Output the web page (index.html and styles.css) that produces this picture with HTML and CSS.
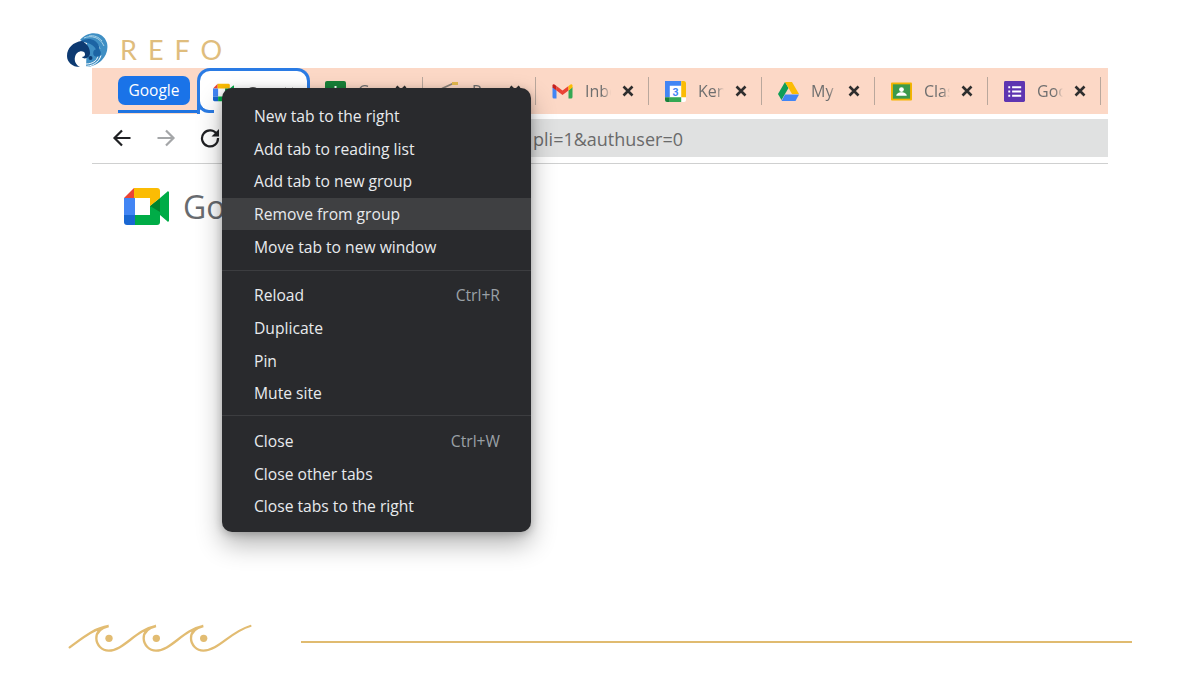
FILE: index.html
```html
<!DOCTYPE html>
<html lang="en">
<head>
<meta charset="utf-8">
<title>REFO</title>
<link rel="stylesheet" href="styles.css">
</head>
<body>
<svg class="sprite" aria-hidden="true"><symbol id="x" viewBox="0 0 12 12"><path d="M1.500 1.500l9 9M10.500 1.500l-9 9" fill="none" stroke="#2e2e2e" stroke-width="2.600"/></symbol></svg>
<div class="slide">
  <header class="brand">
    <svg class="brand-mark" viewBox="0 0 41 34">
      <path fill="#3f8fc4" d="M13 7C20-2 36-3 40 10c1.500 7-1 13-5 17-4 4-10 7-16 7L20 10z"/>
      <path d="M17 5c7-3 16-1 20 8M16 8c7-2 14 0 17 8M22 3c5-1 10 1 13 5" fill="none" stroke="#a9d3e8" stroke-width="1"/>
      <path fill="#1c64a4" d="M13 8.500C21 4 29 6 32 13c1 4 .5 8-1 10C30 14 24 9 13 8.500z"/>
      <path fill="#0d3a72" d="M15 8C6 9 0 15 0 23c0 6 5 11 13 11-4-2-6-6-5-10 1-5 6-7 9-5 2 2 1 5-2 5 2 3 8 1 8-4 0-6-4-10-8-12z"/>
      <path d="M17 33.500c8 0 15-4 17-11" fill="none" stroke="#fff" stroke-width="1"/>
      <path d="M19 31c6 0 11-3 12-8" fill="none" stroke="#fff" stroke-width="1"/>
      <circle cx="30" cy="20" r="3.800" fill="#1c64a4"/>
      <circle cx="23.500" cy="25" r="2" fill="#0d3a72"/>
    </svg>
    <span class="brand-name">REFO</span>
  </header>

  <main class="browser">
    <div class="tabstrip">
      <span class="group-pill">Google</span>
      <div class="tab tab-active">
        <svg class="tab-icon" viewBox="0 0 45 37">
          <path fill="#ea4335" d="M10 0L0 10h10z"/>
          <path fill="#4285f4" d="M0 10h11v17H0z"/>
          <path fill="#1967d2" d="M0 27h11v10H3a3 3 0 0 1-3-3z"/>
          <path fill="#fbbc04" d="M10 0h23a3 3 0 0 1 3 3v7H10z"/>
          <path fill="#00ac47" d="M11 27h25v7a3 3 0 0 1-3 3H11z"/>
          <path fill="#00832d" d="M26 10h10v17H26z"/>
          <path fill="#00ac47" d="M36 10l7-6a1 1 0 0 1 2 1v27a1 1 0 0 1-2 1l-7-6z"/>
        </svg>
        <span class="tab-title">Google Meet</span>
        <svg class="tab-close"><use href="#x"/></svg>
      </div>
      <div class="tab tab-first">
        <svg class="tab-icon" viewBox="0 0 21 21">
          <rect width="21" height="21" rx="2" fill="#188038"/>
          <path d="M5 8h11v8H5zM10.500 5v12" fill="none" stroke="#fff" stroke-width="2"/>
        </svg>
        <span class="tab-title">Google Sheets</span>
        <svg class="tab-close"><use href="#x"/></svg>
      </div>
      <div class="tab">
        <svg class="tab-icon" viewBox="0 0 21 21">
          <path d="M3 7.500L14 2.500" fill="none" stroke="#8a8079" stroke-width="1.800"/>
          <path d="M13 1h6v3h-6z" fill="#e4b94e"/>
        </svg>
        <span class="tab-title">Rapport</span>
        <svg class="tab-close"><use href="#x"/></svg>
      </div>
      <div class="tab">
        <svg class="tab-icon" viewBox="-.5 -3.500 21 21">
          <path fill="#4285f4" d="M0 2.500V12.500A1.500 1.500 0 0 0 1.500 14H4V6z"/>
          <path fill="#34a853" d="M16 6v8h2.500a1.500 1.500 0 0 0 1.500-1.500V2.500z"/>
          <path fill="#ea4335" d="M4 1.500L10 6l6-4.500V6l-6 4.500L4 6z"/>
          <path fill="#fbbc04" d="M16 1.500L18 0a1.300 1.300 0 0 1 2 1.500V3l-4 3z"/>
          <path fill="#c5221f" d="M0 3V1.500A1.300 1.300 0 0 1 2 0l2 1.500V6z"/>
        </svg>
        <span class="tab-title">Inbox</span>
        <svg class="tab-close"><use href="#x"/></svg>
      </div>
      <div class="tab">
        <svg class="tab-icon" viewBox="0 0 22 22">
          <rect width="22" height="22" rx="2" fill="#fff"/>
          <path fill="#4285f4" d="M0 0h17v5H5v12H0z"/>
          <path fill="#fbbc04" d="M17 0h3a2 2 0 0 1 2 2v15h-5z"/>
          <path fill="#34a853" d="M5 17h12v5H5z"/>
          <path fill="#188038" d="M0 17h5v5H2a2 2 0 0 1-2-2z"/>
          <text class="cal-day" x="11" y="15.500" text-anchor="middle">3</text>
        </svg>
        <span class="tab-title">Kenzie</span>
        <svg class="tab-close"><use href="#x"/></svg>
      </div>
      <div class="tab">
        <svg class="tab-icon" viewBox="0 0 21 19">
          <path fill="#0f9d58" d="M7 0L0 12l3.500 6L10.500 6z"/>
          <path fill="#fbbc04" d="M7 0h7l7 12h-7z"/>
          <path fill="#4285f4" d="M3.500 19L7 12.500h14L17.500 19z"/>
        </svg>
        <span class="tab-title">My Drive</span>
        <svg class="tab-close"><use href="#x"/></svg>
      </div>
      <div class="tab">
        <svg class="tab-icon" viewBox="0 0 22 19">
          <rect width="22" height="19" rx="1" fill="#f4b400"/>
          <rect x="2" y="2" width="18" height="15" fill="#3c9a4b"/>
          <circle cx="11" cy="7.500" r="2.500" fill="#fff"/>
          <path d="M5.500 14c0-5 11-5 11 0z" fill="#fff"/>
        </svg>
        <span class="tab-title">Classroom</span>
        <svg class="tab-close"><use href="#x"/></svg>
      </div>
      <div class="tab">
        <svg class="tab-icon" viewBox="0 0 22 22">
          <rect width="22" height="22" rx="1.500" fill="#5e35b1"/>
          <path d="M8.500 6.500H18M8.500 11H18M8.500 15.500H18M4.500 6.500h2M4.500 11h2M4.500 15.500h2" stroke="#fff" stroke-width="2" fill="none"/>
        </svg>
        <span class="tab-title">Google Forms</span>
        <svg class="tab-close"><use href="#x"/></svg>
      </div>
    </div>

    <div class="toolbar">
      <svg class="nav-icon" viewBox="0 0 20 20"><path d="M18.500 10H2.500M10 2.500L2.500 10l7.500 7.500" fill="none" stroke="#202124" stroke-width="2.200"/></svg>
      <svg class="nav-icon" viewBox="0 0 20 20"><path d="M1.500 10h16M10 2.500l7.500 7.500-7.500 7.500" fill="none" stroke="#a4a6a8" stroke-width="2.200"/></svg>
      <svg class="nav-icon" viewBox="0 0 20 20"><path d="M17 6.500A8 8 0 1 0 18 10" fill="none" stroke="#202124" stroke-width="2.200"/><path d="M19 1v7.500h-7.500z" fill="#202124"/></svg>
      <div class="address"><span class="address-text">pli=1&amp;authuser=0</span></div>
    </div>

    <div class="page">
      <svg class="meet-logo" viewBox="0 0 45 37">
        <path fill="#ea4335" d="M10 0L0 10h10z"/>
        <path fill="#4285f4" d="M0 10h11v17H0z"/>
        <path fill="#1967d2" d="M0 27h11v10H3a3 3 0 0 1-3-3z"/>
        <path fill="#fbbc04" d="M10 0h23a3 3 0 0 1 3 3v7H10z"/>
        <path fill="#00ac47" d="M11 27h25v7a3 3 0 0 1-3 3H11z"/>
        <path fill="#00ac47" d="M26 18L36 10v17H26z"/>
        <path fill="#00832d" d="M26 18l10-8v14z"/>
        <path fill="#00ac47" d="M36 10l7-6a1 1 0 0 1 2 1v27a1 1 0 0 1-2 1l-7-6z"/>
        <path fill="#fbbc04" d="M26 10h10L26 18z"/>
      </svg>
      <span class="product">Google Meet</span>
    </div>
  </main>

  <nav class="menu">
    <div class="menu-group">
      <div class="menu-item"><span>New tab to the right</span></div>
      <div class="menu-item"><span>Add tab to reading list</span></div>
      <div class="menu-item"><span>Add tab to new group</span></div>
      <div class="menu-item is-hover"><span>Remove from group</span></div>
      <div class="menu-item"><span>Move tab to new window</span></div>
    </div>
    <div class="menu-group">
      <div class="menu-item"><span>Reload</span><span class="shortcut">Ctrl+R</span></div>
      <div class="menu-item"><span>Duplicate</span></div>
      <div class="menu-item"><span>Pin</span></div>
      <div class="menu-item"><span>Mute site</span></div>
    </div>
    <div class="menu-group">
      <div class="menu-item"><span>Close</span><span class="shortcut">Ctrl+W</span></div>
      <div class="menu-item"><span>Close other tabs</span></div>
      <div class="menu-item"><span>Close tabs to the right</span></div>
    </div>
  </nav>

  <footer class="foot">
    <svg class="waves" viewBox="20 30 561 99">
      <path d="M28 112C65 85 100 55 145 48C120 54 108 68 108 85C108 105 125 122 145 122C190 122 225 60 287 48C262 54 250 68 250 85C250 105 267 122 287 122C332 122 367 60 429 48C404 54 392 68 392 85C392 105 409 122 429 122C474 122 510 65 570 48" fill="none" stroke="#e2bc72" stroke-width="7" stroke-linecap="round"/>
      <circle cx="146" cy="85" r="11" fill="#e2bc72"/>
      <circle cx="288" cy="85" r="11" fill="#e2bc72"/>
      <circle cx="430" cy="85" r="11" fill="#e2bc72"/>
    </svg>
    <div class="foot-line"></div>
  </footer>
</div>
</body>
</html>
```

FILE: styles.css
```css
* { box-sizing: border-box; }

html, body {
  margin: 0;
  padding: 0;
  background: #fff;
}

.sprite {
  display: none;
}

.slide {
  position: relative;
  width: 1200px;
  height: 675px;
  overflow: hidden;
  display: flex;
  flex-direction: column;
  font-family: "Open Sans", "Noto Sans", sans-serif;
}

/* Brand */
.brand {
  display: flex;
  align-items: center;
  height: 34px;
  margin-top: 33px;
  margin-bottom: 1px;
  padding-left: 67px;
}

.brand-mark {
  width: 41px;
  height: 34px;
  flex: none;
}

.brand-name {
  margin-left: 12px;
  font-family: "Lato", sans-serif;
  font-size: 27px;
  letter-spacing: 11px;
  color: #dfbd7d;
  line-height: 34px;
}

/* Browser */
.browser {
  width: 1016px;
  margin-left: 92px;
  display: flex;
  flex-direction: column;
}

.tabstrip {
  position: relative;
  display: flex;
  align-items: center;
  height: 46px;
  background: #fcd8c6;
  padding-left: 26px;
}

.group-pill {
  width: 72px;
  height: 29px;
  margin-right: 7px;
  margin-top: -1px;
  border-radius: 7px;
  background: #1a73e8;
  color: #fff;
  font-size: 15.500px;
  line-height: 29px;
  text-align: center;
  flex: none;
}

.group-pill::after {
  content: "";
  position: absolute;
  left: 26px;
  bottom: 1px;
  width: 80px;
  height: 3px;
  background: #1f74e0;
}

.tab {
  display: flex;
  align-items: center;
  flex: none;
  width: 113px;
  height: 28px;
  padding-left: 16px;
  border-right: 1px solid #b9a79c;
  color: #6f6f6f;
  font-size: 16px;
}

.tab-first {
  padding-left: 15px;
}

.tab-active {
  position: relative;
  align-self: flex-start;
  width: 113px;
  height: 46px;
  padding: 0 0 0 13px;
  background: #fff;
  border: 3px solid #2a7be4;
  border-bottom: 0;
  border-radius: 13px 13px 0 0;
  color: #555;
}

.tab-active::after {
  content: "";
  position: absolute;
  left: -3px;
  bottom: 1px;
  width: 14px;
  height: 14px;
  border-left: 3px solid #2a7be4;
  border-bottom: 3px solid #2a7be4;
  border-bottom-left-radius: 12px;
}

.tab-icon {
  width: 21px;
  height: 21px;
  flex: none;
}

.tab-title {
  width: 26px;
  margin-left: 12px;
  overflow: hidden;
  white-space: nowrap;
  -webkit-mask-image: linear-gradient(90deg, #000 70%, transparent);
  mask-image: linear-gradient(90deg, #000 70%, transparent);
}

.tab-close {
  width: 12px;
  height: 12px;
  margin-left: 11px;
  flex: none;
}

.cal-day {
  font-family: "Roboto", sans-serif;
  font-size: 11px;
  font-weight: 700;
  fill: #4285f4;
}

/* Toolbar */
.toolbar {
  display: flex;
  align-items: center;
  height: 50px;
  padding: 5px 0 7px 20px;
  border-bottom: 1px solid #cfd0d0;
}

.nav-icon {
  width: 20px;
  height: 20px;
  flex: none;
  margin-right: 24px;
}

.address {
  flex: 1;
  height: 38px;
  margin-left: -4px;
  padding-top: 2px;
  background: #e0e1e1;
  display: flex;
  align-items: center;
  color: #6a6a6a;
  font-size: 18px;
}

.address-text {
  display: block;
  width: 443px;
  text-align: right;
  white-space: nowrap;
}

/* Page */
.page {
  display: flex;
  align-items: center;
  padding: 24px 0 0 32px;
}

.meet-logo {
  width: 45px;
  height: 37px;
  flex: none;
}

.product {
  margin-left: 14px;
  font-family: "Open Sans", sans-serif;
  font-size: 32px;
  line-height: 37px;
  color: #686b6f;
  white-space: nowrap;
}

/* Context menu */
.menu {
  position: absolute;
  left: 222px;
  top: 88px;
  width: 309px;
  height: 444px;
  padding: 11.500px 0 0;
  background: #292a2d;
  border-radius: 10px;
  box-shadow: 0 12px 26px rgba(0, 0, 0, 0.3), 0 2px 8px rgba(0, 0, 0, 0.22);
  color: #e8eaed;
  font-size: 15.650px;
}

.menu-group + .menu-group {
  margin-top: 7px;
  padding-top: 8px;
  border-top: 1px solid #3c3d40;
}

.menu-group + .menu-group + .menu-group {
  margin-top: 5px;
  padding-top: 9px;
}

.menu-item {
  display: flex;
  justify-content: space-between;
  align-items: center;
  height: 32.700px;
  padding: 0 31px 0 32px;
  white-space: nowrap;
}

.is-hover {
  background: #3f4042;
}

.shortcut {
  color: #9aa0a6;
}

/* Footer */
.foot {
  position: absolute;
  left: 67px;
  top: 620px;
  display: flex;
  align-items: flex-start;
}

.waves {
  width: 187px;
  height: 33px;
  flex: none;
}

.foot-line {
  width: 831px;
  height: 2px;
  margin: 21px 0 0 47px;
  background: #e0bb70;
}
```
